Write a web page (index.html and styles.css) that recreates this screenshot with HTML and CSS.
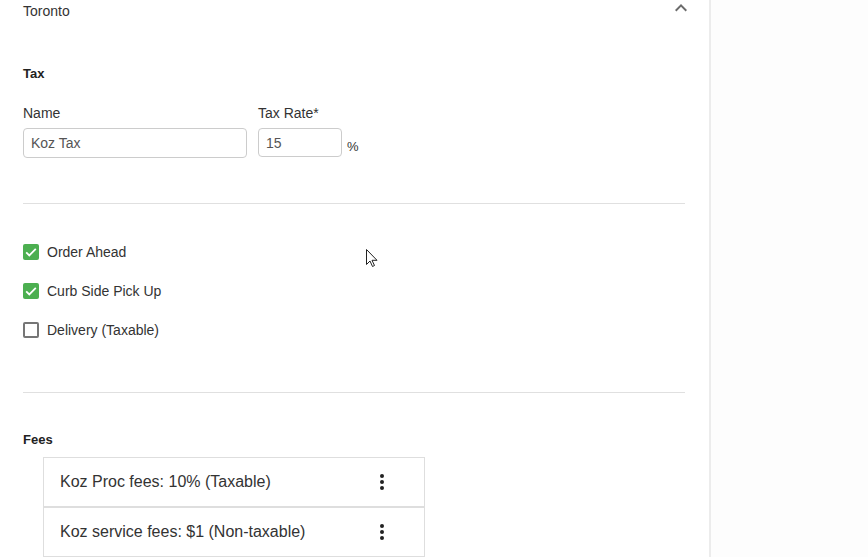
FILE: index.html
```html
<!DOCTYPE html>
<html lang="en">
<head>
    <meta charset="UTF-8">
    <meta name="viewport" content="width=device-width, initial-scale=1.0">
    <title>Location Settings</title>
    <link rel="stylesheet" href="styles.css">
</head>
<body>
    <div class="layout">
        <div class="main">
            <div class="panel-header">
                <span class="location">Toronto</span>
                <svg class="chevron" width="24" height="24" viewBox="0 0 24 24"><path d="M12 8l-6 6 1.41 1.41L12 10.83l4.59 4.58L18 14z" fill="#6b6b6b"/></svg>
            </div>

            <h3 class="section-title tax-title">Tax</h3>
            <div class="tax-fields">
                <div class="field">
                    <label>Name</label>
                    <input type="text" class="name-input" value="Koz Tax">
                </div>
                <div class="field">
                    <label>Tax Rate*</label>
                    <div class="rate-row">
                        <input type="text" class="rate-input" value="15">
                        <span class="percent">%</span>
                    </div>
                </div>
            </div>

            <hr class="divider first-divider">

            <div class="options">
                <div class="option">
                    <span class="checkbox checked">
                        <svg width="16" height="16" viewBox="0 0 16 16"><path d="M3.2 8.3l3.1 3.1 6.5-6.6" fill="none" stroke="#fff" stroke-width="1.8"/></svg>
                    </span>
                    <span>Order Ahead</span>
                </div>
                <div class="option">
                    <span class="checkbox checked">
                        <svg width="16" height="16" viewBox="0 0 16 16"><path d="M3.2 8.3l3.1 3.1 6.5-6.6" fill="none" stroke="#fff" stroke-width="1.8"/></svg>
                    </span>
                    <span>Curb Side Pick Up</span>
                </div>
                <div class="option">
                    <span class="checkbox"></span>
                    <span>Delivery (Taxable)</span>
                </div>
            </div>

            <hr class="divider second-divider">

            <h3 class="section-title fees-title">Fees</h3>
            <ul class="fee-list">
                <li class="fee-item">
                    <span>Koz Proc fees: 10% (Taxable)</span>
                    <svg class="kebab" width="24" height="24" viewBox="0 0 24 24"><circle cx="12" cy="6" r="2"/><circle cx="12" cy="12" r="2"/><circle cx="12" cy="18" r="2"/></svg>
                </li>
                <li class="fee-item">
                    <span>Koz service fees: $1 (Non-taxable)</span>
                    <svg class="kebab" width="24" height="24" viewBox="0 0 24 24"><circle cx="12" cy="6" r="2"/><circle cx="12" cy="12" r="2"/><circle cx="12" cy="18" r="2"/></svg>
                </li>
            </ul>
        </div>
        <div class="side"></div>
    </div>

    <!-- mouse pointer captured in the screenshot -->
    <svg class="cursor" width="13" height="20" viewBox="0 0 13 20"><path d="M0.5 0.5v15l3.5-3.5 2.5 5.5 2-1-2.5-5.2h5z" fill="#fff" stroke="#222" stroke-width="1"/></svg>
</body>
</html>
```

FILE: styles.css
```css
* {
    margin: 0;
    padding: 0;
    box-sizing: border-box;
}

body {
    font-family: "Liberation Sans", Arial, sans-serif;
    color: #333;
    background: #fff;
    height: 557px;
    overflow: hidden;
    position: relative;
}

.layout {
    display: flex;
    height: 557px;
}

.main {
    width: 711px;
    padding: 0 24px 0 23px;
    border-right: 2px solid #ececec;
}

.side {
    flex: 1;
    background: #fdfdfd;
}

.panel-header {
    display: flex;
    justify-content: space-between;
    align-items: flex-start;
    height: 22px;
    line-height: 22px;
    font-size: 14px;
}

.chevron {
    margin-top: -4px;
    margin-right: -8px;
}

.section-title {
    font-size: 13px;
    font-weight: bold;
    line-height: 16px;
    color: #222;
}

.tax-title {
    margin-top: 44px;
}

.tax-fields {
    display: flex;
    gap: 11px;
    margin-top: 23px;
}

.field label {
    display: block;
    font-size: 14px;
    line-height: 16px;
    margin-bottom: 7px;
}

input {
    height: 30px;
    border: 1px solid #ccc;
    border-radius: 4px;
    padding: 0 7px;
    font-family: inherit;
    font-size: 14px;
    color: #555;
    outline: none;
}

.name-input {
    width: 224px;
}

.rate-row {
    display: flex;
    align-items: flex-end;
    gap: 5px;
}

.rate-input {
    width: 84px;
    height: 29px;
}

.percent {
    font-size: 13px;
    line-height: 13px;
    margin-bottom: 4px;
}

.divider {
    border: none;
    border-top: 1px solid #e0e0e0;
}

.first-divider {
    margin-top: 45px;
}

.options {
    display: flex;
    flex-direction: column;
    gap: 23px;
    margin-top: 40px;
}

.option {
    display: flex;
    align-items: center;
    gap: 8px;
    height: 16px;
    font-size: 14px;
}

.checkbox {
    width: 16px;
    height: 16px;
    border: 2px solid #767676;
    border-radius: 2px;
    display: inline-flex;
}

.checkbox.checked {
    border: none;
    background: #4caf50;
}

.second-divider {
    margin-top: 54px;
}

.fees-title {
    margin-top: 39px;
}

.fee-list {
    list-style: none;
    margin: 9px 0 0 20px;
    width: 382px;
}

.fee-item {
    display: flex;
    justify-content: space-between;
    align-items: center;
    height: 50px;
    padding: 0 30px 0 16px;
    border: 1px solid #dedede;
    font-size: 16px;
    color: #333;
}

.kebab {
    fill: #222;
}

.cursor {
    position: absolute;
    left: 366px;
    top: 249px;
}
```
